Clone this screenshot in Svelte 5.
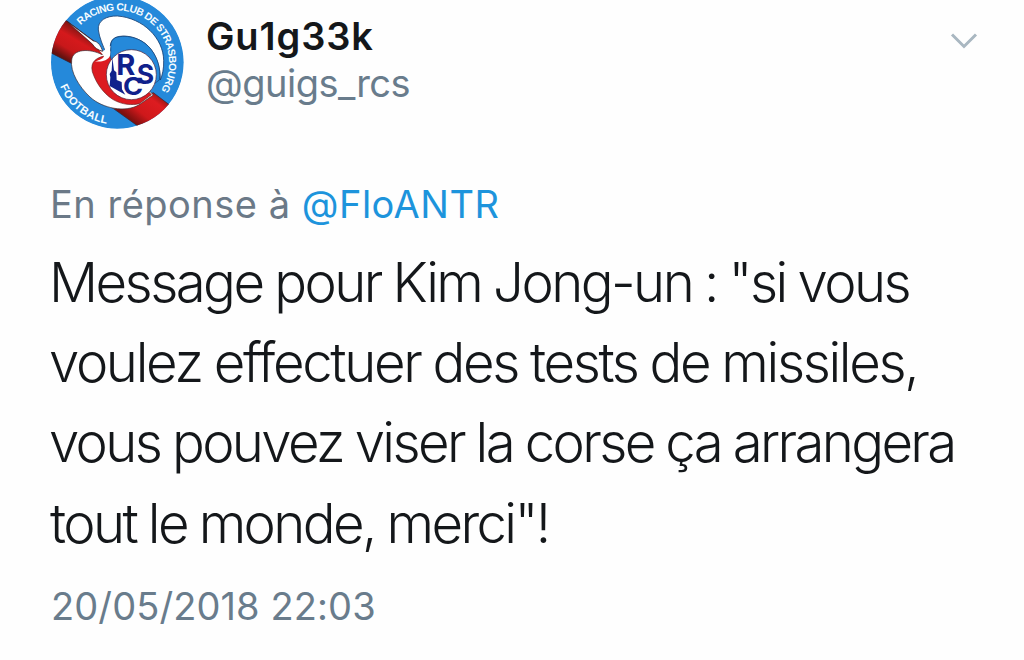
<script>
  const lines = [
    { text: 'Message pour Kim Jong-un : "si vous', spacing: -2.55 },
    { text: 'voulez effectuer des tests de missiles,', spacing: -2.34 },
    { text: 'vous pouvez viser la corse ça arrangera', spacing: -2.63 },
    { text: 'tout le monde, merci"!', spacing: -2.6 }
  ];
</script>

<article class="tweet">
  <header>
    <svg class="avatar" viewBox="30 0 405 390" role="img" aria-label="Racing Club de Strasbourg">
      <defs>
        <clipPath id="disc"><circle cx="232" cy="187" r="199" /></clipPath>
        <linearGradient id="bandA" gradientUnits="userSpaceOnUse" x1="125" y1="90" x2="75" y2="175">
          <stop offset="0" stop-color="#7d1512" /><stop offset=".35" stop-color="#d5191c" />
          <stop offset=".7" stop-color="#c8181a" /><stop offset="1" stop-color="#67120f" />
        </linearGradient>
        <linearGradient id="bandB" gradientUnits="userSpaceOnUse" x1="365" y1="285" x2="295" y2="375">
          <stop offset="0" stop-color="#8d1512" /><stop offset=".25" stop-color="#dd1c20" />
          <stop offset=".7" stop-color="#cf181b" /><stop offset="1" stop-color="#7d100f" />
        </linearGradient>
        <path id="topArc" d="M122 76A156 156 0 1 1 310 322" />
        <path id="lowArc" d="M60 259A187 187 0 0 0 232 374" />
      </defs>
      <g clip-path="url(#disc)">
        <circle cx="232" cy="187" r="200" fill="#2589da" />
        <path d="M20 30L82 64L175 133L195 170L98 192L20 152Z" fill="url(#bandA)" stroke="#31202a" stroke-width="2" />
        <path d="M340 278L390 316L310 390L215 322Z" fill="url(#bandB)" stroke="#31202a" stroke-width="2" />
      </g>
      <path d="M186 164C150 145 98 146 95 180C90 216 117 260 150 291C188 326 256 338 296 315L340 285L210 150Z" fill="#fff" stroke="#34262d" stroke-width="2" />
      <path d="M198 158C190 140 178 113 175 90C172 62 199 47 232 48C310 54 370 115 371 181C372 205 367 226 361 240C362 201 348 163 326 140C300 112 254 102 228 112C202 124 216 151 205 170Z" fill="#fff" stroke="#193f70" stroke-width="2.500" />
      <path d="M203 166C170 171 150 184 157 215C168 248 187 277 218 298C247 315 276 316 298 311L334 284L220 158Z" fill="#dc1b20" stroke="#67201f" stroke-width="2" />
      <path d="M210 165C217 145 204 125 226 113C263 101 310 117 334 149C354 176 362 205 358 240L330 260L214 181Z" fill="#2589da" stroke="#193f70" stroke-width="2" />
      <path d="M176 149C186 157 196 155 198 139L212 139C207 151 216 166 205 175C194 185 180 185 165 185C180 179 190 176 192 168Z" fill="#fff" />
      <path d="M82 65L160 123C174 124 183 138 188 154C174 150 163 143 158 133Z" fill="#fff" stroke="#321b21" stroke-width="2" />
      <circle cx="274" cy="224" r="75" fill="#fff" stroke="#471b35" stroke-width="2" />
      <path d="M217 172L222 211L229 217L230 240L245 246L246 268L256 284L209 258L211 232L209 222L215 212Z" fill="#10218c" />
      <g class="mono">
        <text transform="translate(229 226) scale(1.04 1)" font-size="84">R</text>
        <text transform="translate(290 252) scale(.96 1)" font-size="83">S</text>
        <text transform="translate(249 284) scale(1.1 1)" font-size="74">C</text>
      </g>
      <g class="ring">
        <text class="club"><textPath href="#topArc">RACING CLUB DE STRASBOURG</textPath></text>
        <text class="foot"><textPath href="#lowArc">FOOTBALL</textPath></text>
      </g>
    </svg>
    <div class="identity">
      <strong>Gu1g33k</strong>
      <span class="handle">@guigs_rcs</span>
    </div>
    <svg class="chevron" viewBox="0 0 28 18" aria-hidden="true">
      <path d="M2 2.500L14 14.500L26 2.500" fill="none" stroke="#a9b7c1" stroke-width="3" />
    </svg>
  </header>
  <p class="reply">En réponse à <span class="mention">@FloANTR</span></p>
  <p class="message">
    {#each lines as line}
      <span style="letter-spacing: {line.spacing}px">{line.text}</span>
    {/each}
  </p>
  <time>20/05/2018 22:03</time>
</article>

<style>
  :global(body) { margin: 0; background: #fefefe; overflow: hidden; }
  .tweet {
    box-sizing: border-box;
    width: 1024px;
    height: 660px;
    padding: 0 46px 0 50px;
    background: #fefefe;
    color: #14171a;
    font-family: Inter, "Liberation Sans", sans-serif;
    font-size: 38px;
    line-height: 48px;
  }
  header { display: flex; height: 180px; align-items: flex-start; }
  .avatar { width: 135px; height: 130px; flex: none; }
  .identity { display: flex; flex-direction: column; padding: 12px 0 0 21px; }
  strong { font-weight: 600; letter-spacing: 0.9px; height: 47px; }
  .handle { color: #697c8c; letter-spacing: -0.5px; }
  .chevron { width: 28px; height: 18px; margin: 32px 0 0 auto; }
  p { margin: 0; }
  .reply { color: #6b7987; letter-spacing: 0.5px; height: 62px; white-space: nowrap; }
  .mention { color: #1d94dc; letter-spacing: 0.5px; }
  .message { margin-left: -1px; font-size: 54.5px; font-weight: 300; line-height: 80.2px; height: 340px; word-spacing: -1px; }
  .message span { display: block; white-space: nowrap; width: max-content; }
  .message span:last-child { margin-left: 1px; }
  time { display: block; margin-left: 1px; color: #697c8c; letter-spacing: 0.1px; }
  .mono { font-family: Inter, sans-serif; font-weight: 700; fill: #10218c; }
  .ring { font-family: "Liberation Sans", sans-serif; font-weight: 700; fill: #f5fcff; }
  .club { font-size: 31px; letter-spacing: -1.8px; }
  .foot { font-size: 33px; letter-spacing: 1px; }
</style>
